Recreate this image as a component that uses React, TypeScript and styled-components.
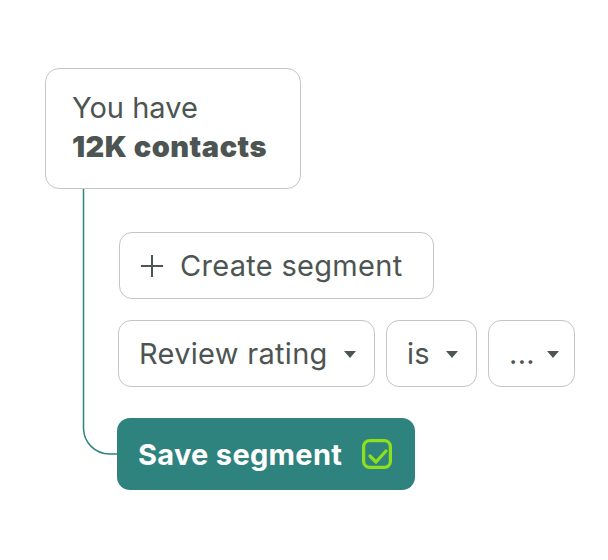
import React from "react";
import styled, { createGlobalStyle } from "styled-components";

const Global = createGlobalStyle`
  html, body { margin: 0; padding: 0; background: #ffffff; }
  body { font-family: "Inter", "Liberation Sans", sans-serif; color: #4d5552; }
`;

const Page = styled.div`
  position: relative;
  width: 608px;
  height: 560px;
  box-sizing: border-box;
  padding: 68px 0 0 45px;
`;

const ContactCard = styled.div`
  box-sizing: border-box;
  width: 256px;
  height: 121px;
  border: 1.5px solid #c2c6c4;
  border-radius: 14px;
  padding: 22px 0 0 26px;
  display: flex;
  flex-direction: column;
  gap: 5px;
`;

const Lead = styled.div`
  font-size: 29px;
  font-weight: 400;
  line-height: 34px;
  letter-spacing: 0px;
`;

const Count = styled.div`
  font-size: 29px;
  font-weight: 900;
  line-height: 34px;
  letter-spacing: 0.5px;
`;

const Flow = styled.div`
  display: flex;
  flex-direction: column;
  align-items: flex-start;
  margin: 43px 0 0 74px;
`;

const Pill = styled.div<{ $w: number; $gap?: number }>`
  box-sizing: border-box;
  width: ${(p) => p.$w}px;
  height: 67px;
  border: 1.5px solid #c2c6c4;
  border-radius: 13px;
  display: flex;
  align-items: center;
  padding-left: 20px;
  gap: ${(p) => p.$gap ?? 16}px;
  font-size: 29px;
  font-weight: 400;
  letter-spacing: 0.3px;
  color: #4d5552;
`;

const FilterRow = styled.div`
  display: flex;
  gap: 11px;
  margin: 21px 0 0 -1px;
`;

const Caret = styled.span`
  width: 0;
  height: 0;
  border-left: 6.5px solid transparent;
  border-right: 6.5px solid transparent;
  border-top: 7px solid #4d5552;
  margin-top: 2px;
`;

const SaveButton = styled.div`
  box-sizing: border-box;
  width: 298px;
  height: 72px;
  margin: 31px 0 0 -2px;
  border-radius: 13px;
  background: #2f837f;
  display: flex;
  align-items: center;
  padding-left: 21px;
  gap: 20px;
  color: #ffffff;
  font-size: 29px;
  font-weight: 700;
  letter-spacing: 0.3px;
`;

const Connector = styled.svg`
  position: absolute;
  left: 82px;
  top: 189px;
  overflow: visible;
`;

const PlusIcon = () => (
  <svg width="24" height="24" viewBox="0 0 24 24">
    <path d="M12 1v22M1 12h22" stroke="#4d5552" strokeWidth="2" fill="none" />
  </svg>
);

const CheckIcon = () => (
  <svg width="30" height="30" viewBox="0 0 30 30">
    <rect x="1.6" y="1.6" width="26.8" height="26.8" rx="6" fill="none" stroke="#8ee01a" strokeWidth="3.2" />
    <path d="M8 17l6 6 10-11" fill="none" stroke="#8ee01a" strokeWidth="3.2" strokeLinecap="round" strokeLinejoin="round" />
  </svg>
);

export default function App() {
  return (
    <Page>
      <Global />
      <Connector width="40" height="270">
        <path d="M1.5 0 V239 A26 26 0 0 0 27.5 265 H36" fill="none" stroke="#2f837f" strokeWidth="1.5" />
      </Connector>
      <ContactCard>
        <Lead>You have</Lead>
        <Count>12K contacts</Count>
      </ContactCard>
      <Flow>
        <Pill $w={315}>
          <PlusIcon />
          <span>Create segment</span>
        </Pill>
        <FilterRow>
          <Pill $w={257}>
            <span>Review rating</span>
            <Caret />
          </Pill>
          <Pill $w={91}>
            <span>is</span>
            <Caret />
          </Pill>
          <Pill $w={87} $gap={12}>
            <span>...</span>
            <Caret />
          </Pill>
        </FilterRow>
        <SaveButton>
          <span>Save segment</span>
          <CheckIcon />
        </SaveButton>
      </Flow>
    </Page>
  );
}
